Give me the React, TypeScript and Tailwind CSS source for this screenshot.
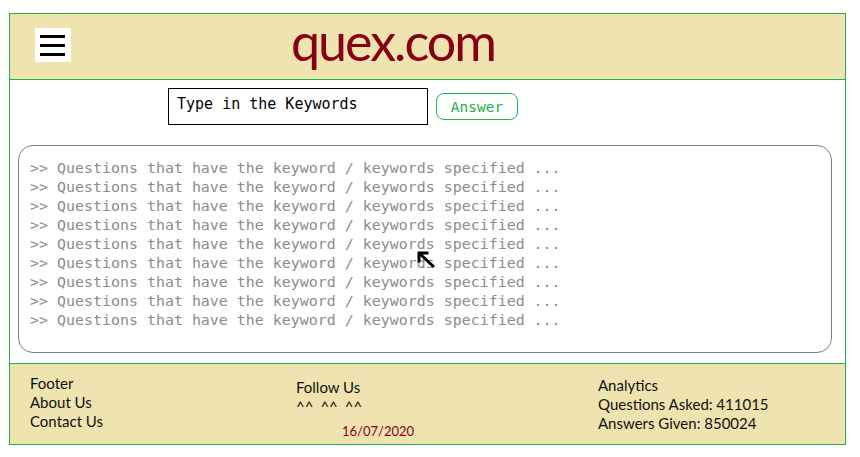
const results = Array.from({ length: 9 }, () => ">> Questions that have the keyword / keywords specified ...");

const mono = { fontFamily: '"DejaVu Sans Mono", monospace' };

export default function App() {
  return (
    <div className="min-h-screen bg-white pl-[9px] pt-[13px]">
      <div className="w-[837px] border border-[#22b14c] bg-white">
        {/* Header */}
        <header className="flex h-[66px] items-start border-b border-[#22b14c] bg-[#efe4b0]">
          <div className="ml-[25px] mt-[14px] flex h-[34px] w-[36px] flex-col gap-[6px] bg-white px-[5px] pt-[7px]">
            <span className="h-[3px] w-[25px] bg-black" />
            <span className="h-[3px] w-[25px] bg-black" />
            <span className="h-[3px] w-[25px] bg-black" />
          </div>
          <h1 className="ml-[220px] mt-[1px] text-[52px] leading-[52px] tracking-[-2px] text-[#880015] font-['Lato',sans-serif]">
            quex.com
          </h1>
        </header>

        {/* Search + results */}
        <main className="pt-[8px] pb-[10px]">
          <div className="flex items-start">
            <div
              className="ml-[158px] h-[37px] w-[260px] border border-black pl-[8px] pt-[6px] text-[15px] leading-[19px] text-black"
              style={mono}
            >
              Type in the Keywords
            </div>
            <button
              className="ml-[8px] mt-[5px] h-[27px] w-[82px] rounded-lg border border-[#22b14c] pt-[2px] text-[14.5px] leading-[19px] text-[#22b14c]"
              style={mono}
            >
              Answer
            </button>
          </div>

          <div className="relative ml-[8px] mt-[20px] h-[208px] w-[814px] rounded-[15px] border border-[#7f7f7f] pl-[11px] pt-[13px]">
            {results.map((r, i) => (
              <div key={i} className="text-[14.95px] leading-[19px] text-[#8c8c8c]" style={mono}>
                {r}
              </div>
            ))}
            {/* mouse cursor */}
            <svg
              className="absolute left-[398px] top-[105px]"
              width="20"
              height="18"
              viewBox="0 0 20 18"
              fill="none"
              stroke="black"
              strokeWidth="3"
            >
              <path d="M2 2 L17 16" />
              <path d="M2 10 L2 2 L10 2" strokeLinecap="square" />
            </svg>
          </div>
        </main>

        {/* Footer */}
        <footer className="flex h-[81px] border-t border-[#22b14c] bg-[#efe4b0] text-[15px] leading-[19px] text-[#111] font-['Lato',sans-serif]">
          <div className="w-[286px] pl-[20px] pt-[10px]">
            <p>Footer</p>
            <p>About Us</p>
            <p>Contact Us</p>
          </div>
          <div className="w-[302px] pt-[14px]">
            <p>Follow Us</p>
            <p className="flex gap-[7px]">
              <span>^^</span>
              <span>^^</span>
              <span>^^</span>
            </p>
            <p className="ml-[46px] mt-[7px] text-[13px] leading-[17px] text-[#880015]">16/07/2020</p>
          </div>
          <div className="pt-[12px]">
            <p>Analytics</p>
            <p>Questions Asked: 411015</p>
            <p>Answers Given: 850024</p>
          </div>
        </footer>
      </div>
    </div>
  );
}
